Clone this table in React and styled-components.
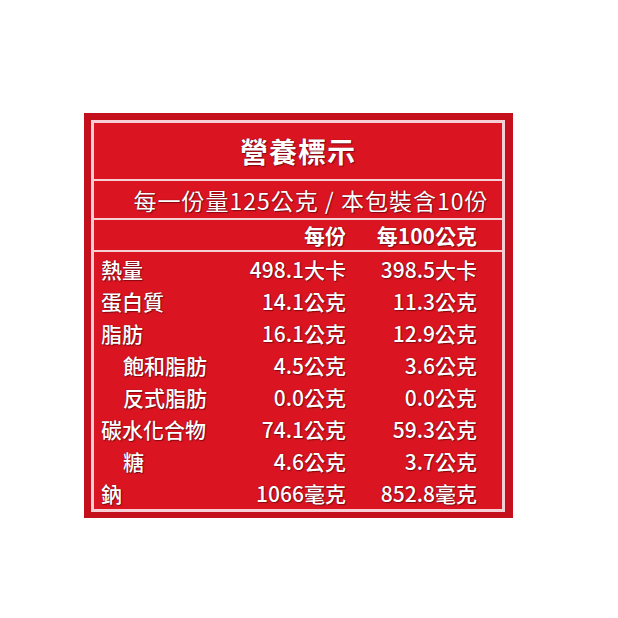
import React from "react";
import styled, { createGlobalStyle } from "styled-components";

const Global = createGlobalStyle`
  html, body { margin: 0; padding: 0; background: #ffffff; }
  body { font-family: "Noto Sans CJK TC", "Noto Sans", sans-serif; }
`;

const Page = styled.div`
  padding: 113px 0 0 84px;
`;

const Frame = styled.div`
  width: 429px;
  box-sizing: border-box;
  padding: 7px 8px 6px 7px;
  background: #c3101c;
`;

const Panel = styled.div`
  border: 3px solid #f6cfd4;
  background: #da1420;
  color: #ffffff;
  text-shadow: 0 0 1px #5c0010, 1px 1px 1px rgba(70, 0, 10, 0.55);
`;

const TitleRow = styled.div`
  height: 56px;
  display: flex;
  align-items: center;
  justify-content: center;
  font-size: 28px;
  font-weight: 700;
  letter-spacing: 1px;
  border-bottom: 2px solid #f6cfd4;
`;

const ServingRow = styled.div`
  height: 37px;
  display: flex;
  align-items: center;
  justify-content: center;
  padding-left: 26px;
  font-size: 23px;
  font-weight: 400;
  letter-spacing: 1px;
  border-bottom: 2px solid #f6cfd4;
`;

const Grid = styled.div`
  display: grid;
  grid-template-columns: 1fr 130px 131px;
  padding: 0 25px 0 7px;
  align-items: center;
  border-bottom: ${(p) => (p.$divider ? "2px solid #f6cfd4" : "none")};
  height: ${(p) => p.$h}px;
  font-size: 21px;
  font-weight: ${(p) => (p.$bold ? 700 : 500)};
`;

const Label = styled.div`
  padding-left: ${(p) => (p.$indent ? 22 : 0)}px;
  white-space: nowrap;
`;

const Value = styled.div`
  text-align: right;
  white-space: nowrap;
`;

const Body = styled.div`
  padding-top: 1px;
`;

const rows = [
  ["熱量", "498.1大卡", "398.5大卡", false],
  ["蛋白質", "14.1公克", "11.3公克", false],
  ["脂肪", "16.1公克", "12.9公克", false],
  ["飽和脂肪", "4.5公克", "3.6公克", true],
  ["反式脂肪", "0.0公克", "0.0公克", true],
  ["碳水化合物", "74.1公克", "59.3公克", false],
  ["糖", "4.6公克", "3.7公克", true],
  ["鈉", "1066毫克", "852.8毫克", false],
];

export default function App() {
  return (
    <>
      <Global />
      <Page>
        <Frame>
          <Panel>
            <TitleRow>營養標示</TitleRow>
            <ServingRow>每一份量125公克 / 本包裝含10份</ServingRow>
            <Grid $divider $bold $h={30}>
              <Label />
              <Value>每份</Value>
              <Value>每100公克</Value>
            </Grid>
            <Body>
              {rows.map(([l, a, b, ind]) => (
                <Grid key={l} $h={32}>
                  <Label $indent={ind}>{l}</Label>
                  <Value>{a}</Value>
                  <Value>{b}</Value>
                </Grid>
              ))}
            </Body>
          </Panel>
        </Frame>
      </Page>
    </>
  );
}
